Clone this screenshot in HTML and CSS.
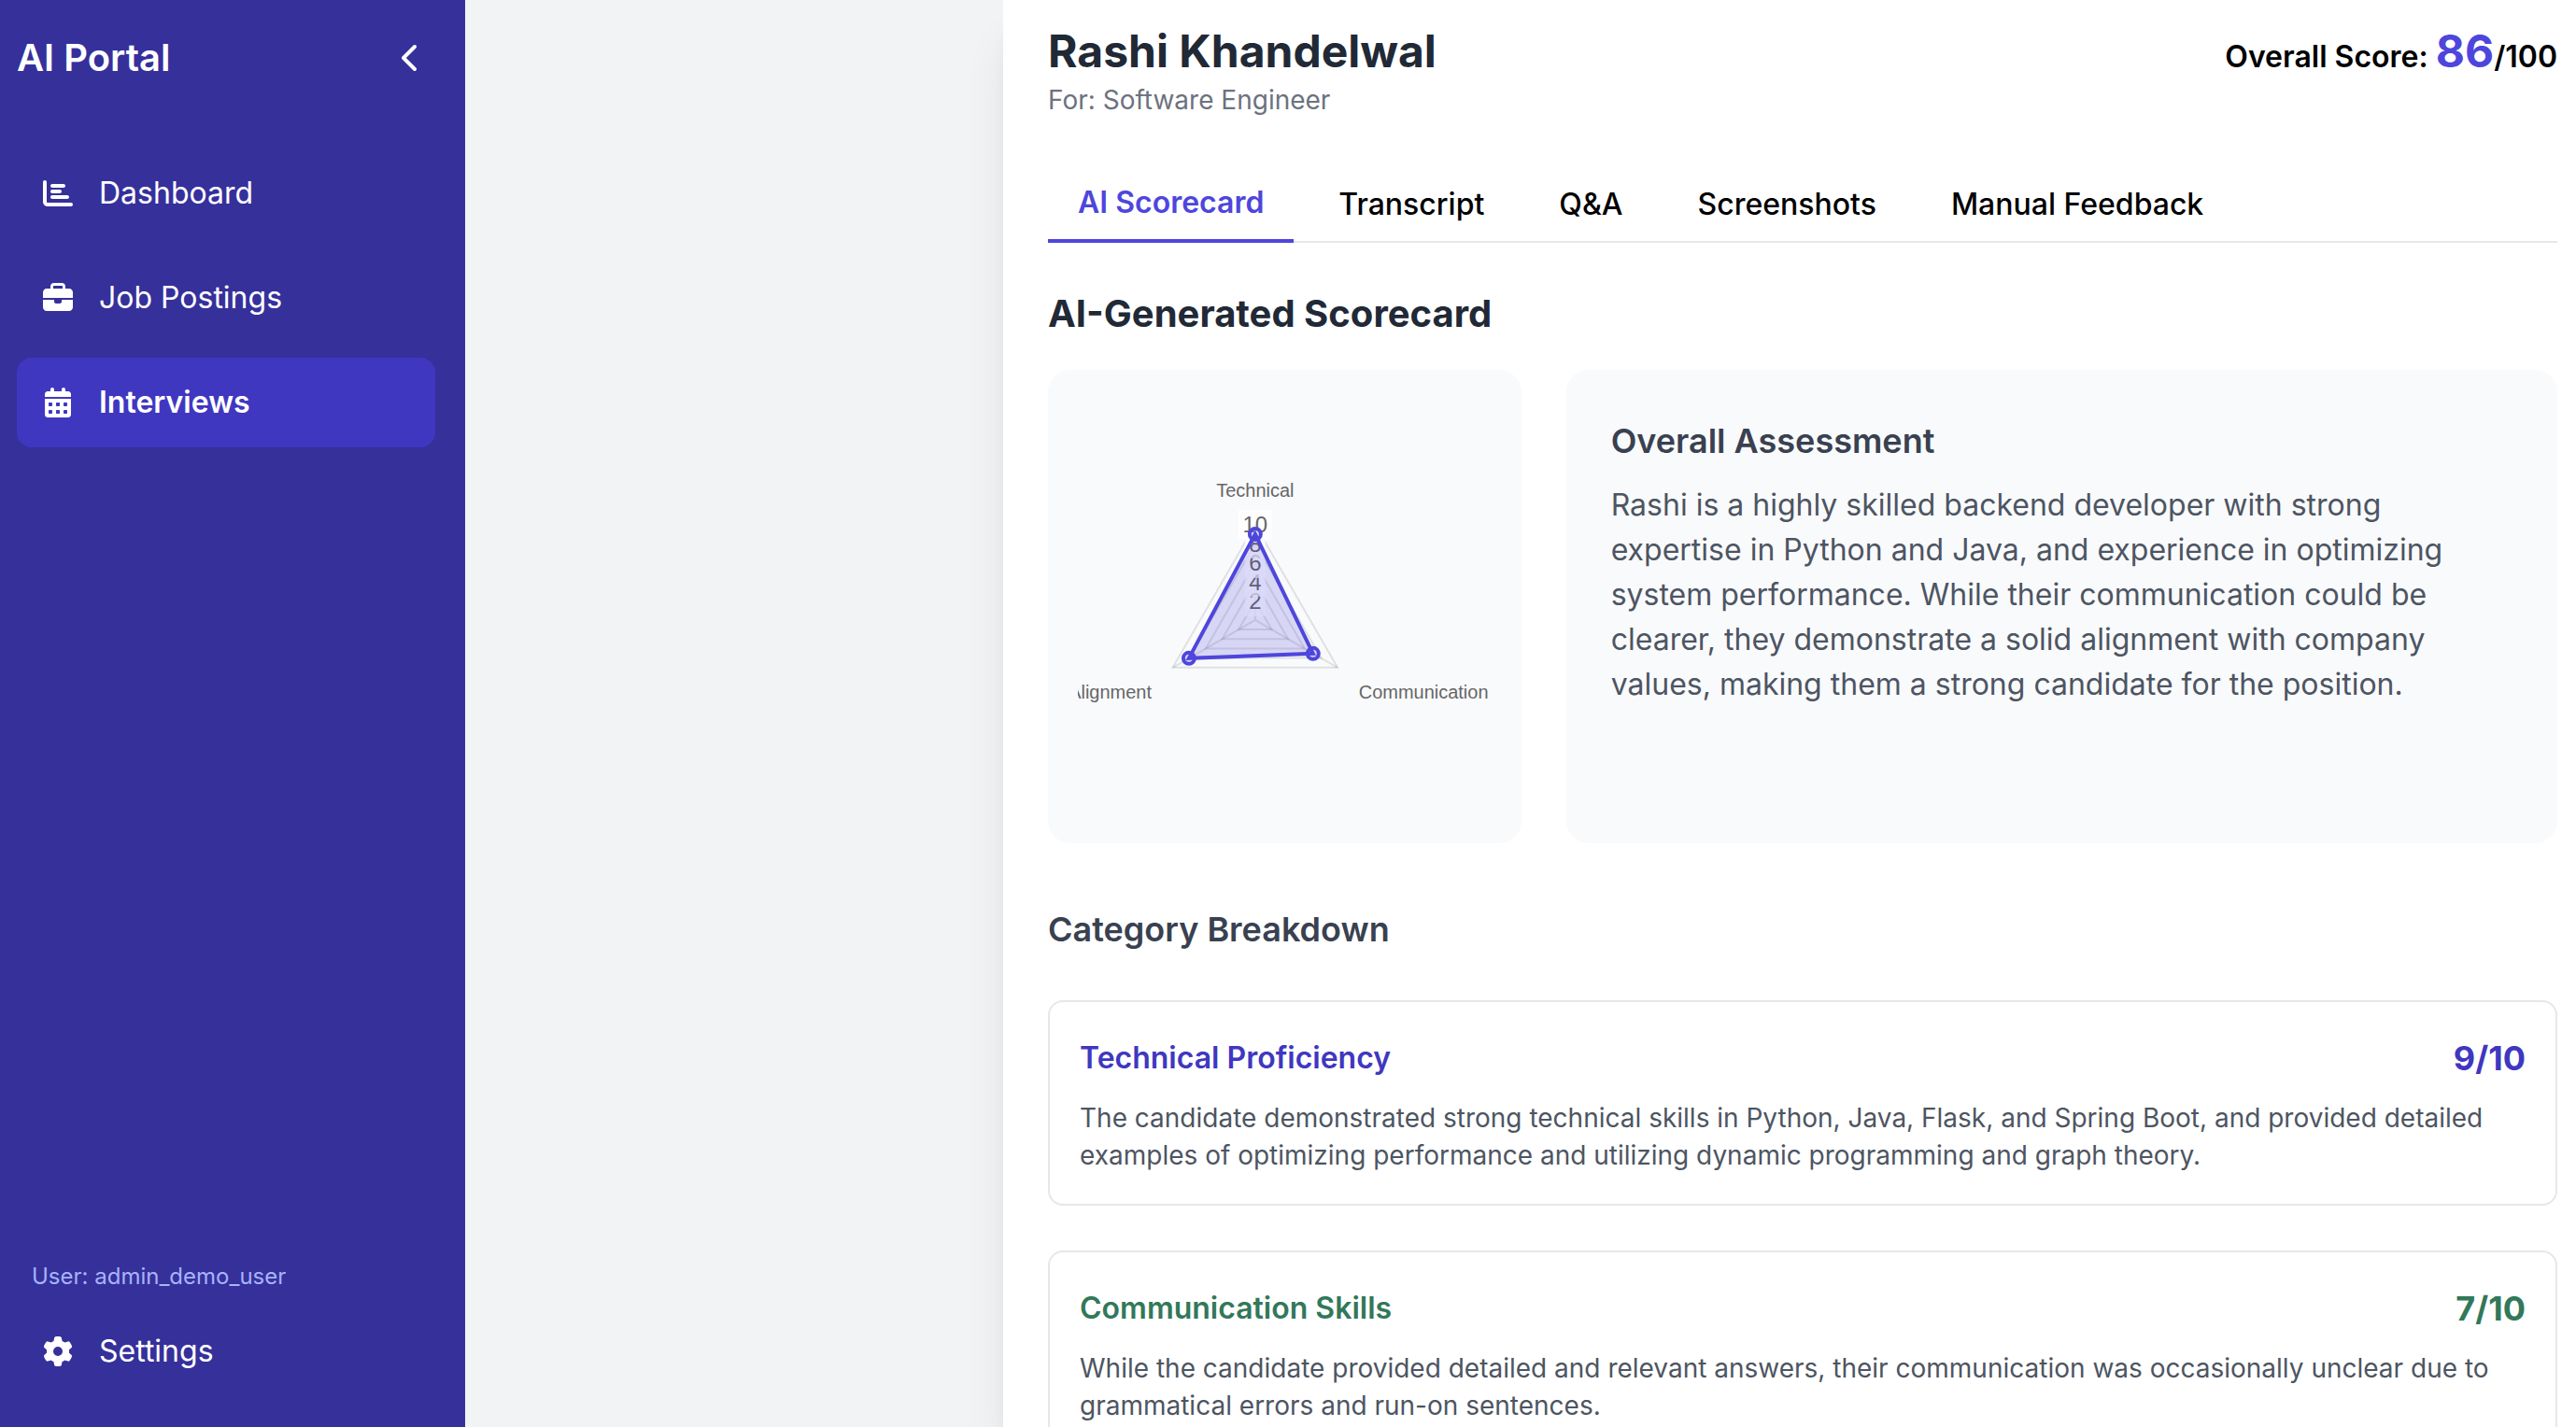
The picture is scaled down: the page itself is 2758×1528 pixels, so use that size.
FILE: index.html
```
<!DOCTYPE html>
<html lang="en">
<head>
<meta charset="utf-8">
<title>AI Portal - Interviews</title>
<meta name="viewport" content="width=device-width, initial-scale=1">
<link rel="stylesheet" href="styles.css">
</head>
<body>
<div class="app">
  <aside class="sidebar">
    <div class="brand">
      <h1 class="brand-name">AI Portal</h1>
      <button class="collapse" type="button" aria-label="Collapse sidebar">
        <svg class="icon-chevron" viewBox="0 0 320 512" aria-hidden="true"><path d="M9.400 233.400c-12.500 12.500-12.500 32.800 0 45.300l192 192c12.500 12.500 32.800 12.500 45.300 0s12.500-32.800 0-45.300L77.300 256 246.600 86.600c12.500-12.500 12.500-32.800 0-45.300s-32.800-12.500-45.300 0l-192 192z"/></svg>
      </button>
    </div>
    <nav class="nav" aria-label="Main">
      <a class="nav-item" href="#dashboard">
        <svg class="icon" viewBox="0 0 512 512" aria-hidden="true"><path d="M32 32c17.700 0 32 14.300 32 32V400c0 8.800 7.200 16 16 16H480c17.700 0 32 14.300 32 32s-14.300 32-32 32H80c-44.200 0-80-35.800-80-80V64C0 46.300 14.300 32 32 32zm96 96c0-17.700 14.300-32 32-32H352c17.700 0 32 14.300 32 32s-14.300 32-32 32H160c-17.700 0-32-14.300-32-32zm32 64H288c17.700 0 32 14.300 32 32s-14.300 32-32 32H160c-17.700 0-32-14.300-32-32s14.300-32 32-32zm0 96H416c17.700 0 32 14.300 32 32s-14.300 32-32 32H160c-17.700 0-32-14.300-32-32s14.300-32 32-32z"/></svg>
        <span>Dashboard</span>
      </a>
      <a class="nav-item" href="#jobs">
        <svg class="icon" viewBox="0 0 512 512" aria-hidden="true"><path d="M184 48H328c4.400 0 8 3.600 8 8V96H176V56c0-4.400 3.600-8 8-8zm-56 8V96H64C28.700 96 0 124.700 0 160v96H192 320 512V160c0-35.300-28.700-64-64-64H384V56c0-30.900-25.100-56-56-56H184c-30.900 0-56 25.100-56 56zM512 288H320v32c0 17.700-14.300 32-32 32H224c-17.700 0-32-14.300-32-32V288H0V416c0 35.300 28.700 64 64 64H448c35.300 0 64-28.700 64-64V288z"/></svg>
        <span>Job Postings</span>
      </a>
      <a class="nav-item nav-item-active" href="#interviews" aria-current="page">
        <svg class="icon" viewBox="-32 0 512 512" aria-hidden="true"><path d="M128 0c17.700 0 32 14.300 32 32V64H288V32c0-17.700 14.300-32 32-32s32 14.300 32 32V64h48c26.500 0 48 21.500 48 48v48H0V112C0 85.500 21.500 64 48 64H96V32c0-17.700 14.300-32 32-32zM0 192H448V464c0 26.500-21.500 48-48 48H48c-26.500 0-48-21.500-48-48V192zm64 80v32c0 8.800 7.200 16 16 16h32c8.800 0 16-7.200 16-16V272c0-8.800-7.200-16-16-16H80c-8.800 0-16 7.200-16 16zm128 0v32c0 8.800 7.200 16 16 16h32c8.800 0 16-7.200 16-16V272c0-8.800-7.200-16-16-16H208c-8.800 0-16 7.200-16 16zm144-16c-8.800 0-16 7.200-16 16v32c0 8.800 7.200 16 16 16h32c8.800 0 16-7.200 16-16V272c0-8.800-7.200-16-16-16H336zM64 400v32c0 8.800 7.200 16 16 16h32c8.800 0 16-7.200 16-16V400c0-8.800-7.200-16-16-16H80c-8.800 0-16 7.200-16 16zm144-16c-8.800 0-16 7.200-16 16v32c0 8.800 7.200 16 16 16h32c8.800 0 16-7.200 16-16V400c0-8.800-7.200-16-16-16H208zm112 16v32c0 8.800 7.200 16 16 16h32c8.800 0 16-7.200 16-16V400c0-8.800-7.200-16-16-16H336c-8.800 0-16 7.200-16 16z"/></svg>
        <span>Interviews</span>
      </a>
    </nav>
    <div class="account">
      <p class="user">User: admin_demo_user</p>
      <a class="nav-item" href="#settings">
        <svg class="icon" viewBox="0 0 512 512" aria-hidden="true"><path d="M495.900 166.600c3.200 8.700 .5 18.400-6.400 24.600l-43.300 39.400c1.100 8.300 1.700 16.800 1.700 25.400s-.6 17.100-1.700 25.400l43.300 39.400c6.900 6.200 9.600 15.900 6.400 24.600c-4.400 11.900-9.700 23.300-15.800 34.300l-4.700 8.100c-6.600 11-14 21.400-22.100 31.200c-5.900 7.200-15.700 9.600-24.500 6.800l-55.700-17.700c-13.400 10.300-28.200 18.900-44 25.400l-12.500 57.100c-2 9.100-9 16.300-18.200 17.800c-13.800 2.300-28 3.500-42.500 3.500s-28.700-1.200-42.500-3.500c-9.200-1.500-16.200-8.700-18.200-17.800l-12.500-57.100c-15.800-6.500-30.600-15.100-44-25.400L83.100 425.900c-8.800 2.800-18.600 .3-24.500-6.800c-8.100-9.800-15.500-20.200-22.100-31.200l-4.700-8.100c-6.100-11-11.400-22.400-15.800-34.300c-3.200-8.700-.5-18.400 6.400-24.600l43.300-39.400C64.600 273.100 64 264.600 64 256s.6-17.100 1.700-25.400L22.400 191.200c-6.900-6.200-9.600-15.900-6.400-24.600c4.400-11.900 9.700-23.300 15.800-34.300l4.700-8.100c6.600-11 14-21.400 22.100-31.200c5.900-7.200 15.700-9.600 24.500-6.800l55.700 17.700c13.400-10.300 28.200-18.900 44-25.400l12.500-57.100c2-9.100 9-16.300 18.200-17.800C227.300 1.200 241.500 0 256 0s28.700 1.200 42.500 3.500c9.200 1.500 16.200 8.700 18.200 17.800l12.500 57.100c15.800 6.500 30.600 15.100 44 25.400l55.700-17.700c8.800-2.800 18.600-.3 24.500 6.800c8.100 9.800 15.500 20.200 22.100 31.200l4.700 8.100c6.100 11 11.400 22.400 15.800 34.300zM256 336a80 80 0 1 0 0-160 80 80 0 1 0 0 160z"/></svg>
        <span>Settings</span>
      </a>
    </div>
  </aside>

  <main class="main">
    <section class="panel">
      <header class="candidate">
        <div>
          <h2 class="candidate-name">Rashi Khandelwal</h2>
          <p class="candidate-role">For: Software Engineer</p>
        </div>
        <p class="overall">Overall Score: <span class="overall-value">86</span>/100</p>
      </header>

      <div class="tabs" role="tablist">
        <button class="tab tab-active" type="button" role="tab" aria-selected="true">AI Scorecard</button>
        <button class="tab" type="button" role="tab" aria-selected="false">Transcript</button>
        <button class="tab" type="button" role="tab" aria-selected="false">Q&amp;A</button>
        <button class="tab" type="button" role="tab" aria-selected="false">Screenshots</button>
        <button class="tab" type="button" role="tab" aria-selected="false">Manual Feedback</button>
      </div>

      <h3 class="section-title">AI-Generated Scorecard</h3>
      <div class="summary">
        <div class="chart-card">
          <svg class="radar" viewBox="0 -1 443 443" role="img" aria-label="Radar chart of category scores">
            <g class="radar-grid" transform="translate(190 235)">
              <path d="M0-20.400L17.700 10.200H-17.700Z"/>
              <path d="M0-40.800L35.300 20.400H-35.300Z"/>
              <path d="M0-61.200L53 30.600H-53Z"/>
              <path d="M0-81.600L70.700 40.800H-70.700Z"/>
              <path d="M0-102L88.300 51H-88.300Z"/>
              <path d="M0 0V-102M0 0L88.300 51M0 0L-88.300 51"/>
            </g>
            <g class="radar-ticks">
              <rect x="179" y="199" width="22" height="32"/><text x="190" y="223">2</text>
              <rect x="179" y="178" width="22" height="32"/><text x="190" y="203">4</text>
              <rect x="179" y="158" width="22" height="32"/><text x="190" y="182">6</text>
              <rect x="179" y="137" width="22" height="32"/><text x="190" y="162">8</text>
              <rect x="172" y="117" width="36" height="32"/><text x="190" y="141">10</text>
            </g>
            <g class="radar-labels">
              <text x="190" y="103" text-anchor="middle">Technical</text>
              <text x="301" y="319">Communication</text>
              <text x="79" y="319" text-anchor="end">Alignment</text>
            </g>
            <g class="radar-data">
              <path d="M190 143L252 271L119 276Z"/>
              <circle cx="190" cy="143" r="6"/>
              <circle cx="252" cy="271" r="6"/>
              <circle cx="119" cy="276" r="6"/>
            </g>
          </svg>
        </div>
        <div class="assessment">
          <h4 class="subhead">Overall Assessment</h4>
          <p class="assessment-text">Rashi is a highly skilled backend developer with strong expertise in Python and Java, and experience in optimizing system performance. While their communication could be clearer, they demonstrate a solid alignment with company values, making them a strong candidate for the position.</p>
        </div>
      </div>

      <h4 class="subhead breakdown-title">Category Breakdown</h4>
      <div class="categories">
        <article class="category category-technical">
          <div class="category-head">
            <h5 class="category-name">Technical Proficiency</h5>
            <span class="category-score">9/10</span>
          </div>
          <p class="category-text">The candidate demonstrated strong technical skills in Python, Java, Flask, and Spring Boot, and provided detailed examples of optimizing performance and utilizing dynamic programming and graph theory.</p>
        </article>
        <article class="category category-communication">
          <div class="category-head">
            <h5 class="category-name">Communication Skills</h5>
            <span class="category-score">7/10</span>
          </div>
          <p class="category-text">While the candidate provided detailed and relevant answers, their communication was occasionally unclear due to grammatical errors and run-on sentences.</p>
        </article>
      </div>
    </section>
  </main>
</div>
</body>
</html>
```
FILE: styles.css
```
*, *::before, *::after { box-sizing: border-box; }

body, h1, h2, h3, h4, h5, p { margin: 0; }

body {
  font-family: Inter, "Liberation Sans", sans-serif;
  font-size: 32px;
  line-height: 48px;
  color: #000;
  background: #f2f3f5;
}

button {
  font: inherit;
  color: inherit;
  background: none;
  border: 0;
  padding: 0;
  cursor: pointer;
}

.app { display: flex; height: 100vh; }

/* Sidebar */
.sidebar {
  display: flex;
  flex-direction: column;
  flex: none;
  width: 498px;
  padding: 22px 32px 33px 18px;
  color: #fff;
  background: #36309b;
}

.brand {
  display: flex;
  align-items: center;
  justify-content: space-between;
  height: 80px;
  margin-bottom: 57px;
}

.brand-name { font-size: 40px; line-height: 56px; font-weight: 600; }

.collapse { display: flex; padding: 16px; }

.icon-chevron { width: 20px; height: 32px; fill: currentColor; }

.nav { display: flex; flex-direction: column; gap: 16px; flex: 1; }

.nav-item {
  display: flex;
  align-items: center;
  gap: 28px;
  padding: 24px 28px;
  border-radius: 16px;
  color: #fff;
  text-decoration: none;
}

.nav-item-active { font-weight: 600; background: #4037c0; }

.icon { width: 32px; height: 32px; fill: currentColor; }

.user {
  padding: 0 16px;
  margin-bottom: 16px;
  font-size: 24px;
  line-height: 32px;
  color: #a7b3f8;
}

/* Candidate panel */
.main { flex: 1; min-width: 0; overflow: hidden; }

.panel {
  width: 100%;
  max-width: 1684px;
  height: 100%;
  margin-left: auto;
  padding: 23px 20px 48px 48px;
  overflow-y: auto;
  scrollbar-width: none;
  background: #fff;
  box-shadow: 0 40px 50px -10px rgba(0, 0, 0, 0.1), 0 16px 20px -12px rgba(0, 0, 0, 0.1);
}

.candidate {
  display: flex;
  align-items: flex-start;
  justify-content: space-between;
  margin-bottom: 49px;
}

.candidate-name { font-size: 48px; line-height: 64px; font-weight: 700; color: #212936; }

.candidate-role { font-size: 28px; line-height: 40px; color: #6c727f; }

.overall { line-height: 64px; font-weight: 600; }

.overall-value { font-size: 48px; font-weight: 700; color: #4e46dc; }

.tabs { display: flex; gap: 16px; border-bottom: 2px solid #e5e7eb; }

.tab { padding: 17px 32px 15px; margin-bottom: -2px; font-weight: 500; }

.tab-active { font-weight: 600; color: #4e46dc; border-bottom: 4px solid #4e46dc; }

.section-title {
  margin: 48px 0 32px;
  font-size: 40px;
  line-height: 56px;
  font-weight: 700;
  color: #212936;
}

.summary { display: grid; grid-template-columns: repeat(3, minmax(0, 1fr)); gap: 48px; }

.chart-card, .assessment { border-radius: 24px; background: #f9fafc; }

.chart-card { padding: 32px; aspect-ratio: 1; }

.assessment { grid-column: span 2; padding: 48px; }

.subhead { font-size: 36px; line-height: 56px; font-weight: 600; color: #394150; }

.assessment-text { margin-top: 17px; color: #4d5562; }

/* Radar chart */
.radar { display: block; width: 100%; height: 100%; overflow: hidden; }

.radar text { font-family: "Liberation Sans", sans-serif; fill: #666; }

.radar-grid path { fill: none; stroke: rgba(0, 0, 0, 0.1); stroke-width: 2px; }

.radar-ticks rect { fill: rgba(255, 255, 255, 0.75); }

.radar-ticks text { font-size: 24px; text-anchor: middle; }

.radar-labels text { font-size: 20px; }

.radar-data { fill: rgba(78, 70, 220, 0.2); stroke: #4e46dc; stroke-width: 4px; }

/* Category cards */
.breakdown-title { margin: 64px 0 48px; }

.categories { display: flex; flex-direction: column; gap: 48px; }

.category { padding: 32px; border: 2px solid #e5e7eb; border-radius: 16px; }

.category-head { display: flex; align-items: center; justify-content: space-between; }

.category-name { font-size: 32px; line-height: 48px; font-weight: 600; }

.category-score { font-size: 36px; line-height: 56px; font-weight: 700; }

.category-text { margin-top: 16px; font-size: 28px; line-height: 40px; color: #4d5562; }

.category-technical .category-head { color: #4037c0; }

.category-communication .category-head { color: #32785a; }
```
